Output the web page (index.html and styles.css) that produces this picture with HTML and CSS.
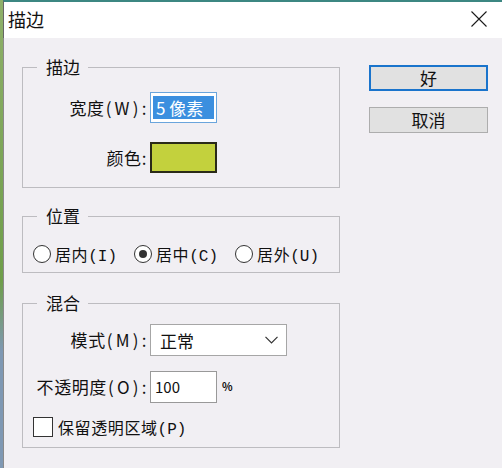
FILE: index.html
```html
<!DOCTYPE html>
<html lang="zh-CN">
<head>
<meta charset="utf-8">
<title>描边</title>
<link rel="stylesheet" href="styles.css">
</head>
<body>
<div class="window">
  <div class="titlebar">
    <span class="title">描边</span>
    <svg class="close" width="16" height="16" viewBox="0 0 16 16"><path d="M0.5 0.5 L15.5 15.5 M15.5 0.5 L0.5 15.5" stroke="#1a1a1a" stroke-width="1.1" fill="none"/></svg>
  </div>
  <div class="body">
    <div class="groups">
      <fieldset class="group g-stroke">
        <legend>描边</legend>
        <div class="form">
          <span class="lbl">宽度<span class="en">(W)</span>:</span>
          <div class="field width-field"><span class="sel">5 像素</span></div>
          <span class="lbl">颜色:</span>
          <div class="swatch"></div>
        </div>
      </fieldset>
      <fieldset class="group g-pos">
        <legend>位置</legend>
        <div class="radios">
          <label class="opt"><input type="radio" name="pos"><span>居内<span class="mono">(I)</span></span></label>
          <label class="opt"><input type="radio" name="pos" checked><span>居中<span class="mono">(C)</span></span></label>
          <label class="opt"><input type="radio" name="pos"><span>居外<span class="mono">(U)</span></span></label>
        </div>
      </fieldset>
      <fieldset class="group g-blend">
        <legend>混合</legend>
        <div class="form blend-form">
          <span class="lbl">模式<span class="en">(M)</span>:</span>
          <div class="select"><span>正常</span>
            <svg width="13" height="8" viewBox="0 0 13 8"><path d="M0.5 0.8 L6.5 6.8 L12.5 0.8" stroke="#333" stroke-width="1.2" fill="none"/></svg>
          </div>
          <span class="lbl">不透明度<span class="en">(O)</span>:</span>
          <div class="opacity-row"><div class="field num-field">100</div><span class="pct">%</span></div>
        </div>
        <label class="check"><input type="checkbox"><span>保留透明区域<span class="mono">(P)</span></span></label>
      </fieldset>
    </div>
    <div class="buttons">
      <button class="btn default">好</button>
      <button class="btn">取消</button>
    </div>
  </div>
</div>
</body>
</html>
```

FILE: styles.css
```css
html, body {
  margin: 0;
  padding: 0;
  height: 100%;
}
body {
  background: #f1eff3;
  font-family: "Noto Sans CJK SC", "Noto Sans", sans-serif;
  color: #111;
  overflow: hidden;
}
.window {
  height: 468px;
  box-sizing: border-box;
  border-left: 3px solid #7ea65a;
  border-image: linear-gradient(to bottom, #8fb06a 0%, #6f9e4a 60%, #7f98b3 75%, #7f98b3 100%) 1;
  border-left-width: 3px;
  border-left-style: solid;
  border-top: none;
  display: flex;
  flex-direction: column;
}
.titlebar {
  height: 38px;
  box-sizing: border-box;
  background: #ffffff;
  border-top: 2px solid #3c8782;
  border-left: 1px solid #666;
  display: flex;
  align-items: center;
  justify-content: space-between;
  padding: 0 15px 0 4px;
}
.title {
  font-size: 18px;
  line-height: 20px;
  margin-top: -2px;
}
.close {
  display: block;
  margin-top: -2px;
}
.body {
  flex: 1;
  display: flex;
  align-items: flex-start;
  padding: 19px 0 0 18px;
  gap: 29px;
  border-left: 1px solid #8a8a8a;
}
.groups {
  display: flex;
  flex-direction: column;
  width: 318px;
}
.group {
  margin: 0;
  border: 1px solid #bdbcc0;
  padding: 0;
  min-width: 0;
}
.group legend {
  font-size: 17px;
  line-height: 20px;
  padding: 0 8px 0 9px;
  margin-left: 14px;
}
.g-stroke { padding: 15px 0 14px 0; }
.g-pos { margin-top: 18px; padding: 18px 0 8px 0; }
.g-blend { margin-top: 20px; padding: 11px 0 10px 0; }

.form {
  display: grid;
  grid-template-columns: 124px auto;
  column-gap: 3px;
  row-gap: 19px;
  align-items: center;
  justify-items: start;
}
.blend-form { row-gap: 15px; }
.lbl {
  justify-self: end;
  font-size: 17px;
  line-height: 20px;
  letter-spacing: 0.6px;
  white-space: nowrap;
}
.lbl .en {
  letter-spacing: 3.2px;
  padding-left: 1px;
}
.field {
  box-sizing: border-box;
  background: #fff;
  border: 1px solid #9a9a9a;
}
.width-field {
  width: 67px;
  height: 31px;
  border-color: #6aa5dc;
  padding: 3px 2px;
  display: flex;
}
.sel {
  background: #3b8fdf;
  color: #fff;
  font-size: 17px;
  line-height: 23px;
  padding: 0 2px 0 3px;
  width: 100%;
  white-space: nowrap;
}
.swatch {
  width: 67px;
  height: 31px;
  box-sizing: border-box;
  background: #c3d13d;
  border: 2px solid #2a2a18;
}
.radios {
  display: flex;
  align-items: center;
  padding-left: 10px;
  gap: 17px;
  height: 20px;
}
.opt, .check {
  display: flex;
  align-items: center;
  gap: 4px;
  font-size: 16px;
  line-height: 20px;
  height: 20px;
  letter-spacing: 0.6px;
  white-space: nowrap;
}
.opt > span, .check > span {
  display: block;
  line-height: 20px;
}
.mono {
  font-family: "Liberation Mono", "DejaVu Sans Mono", monospace;
  letter-spacing: 0;
  line-height: 1;
}
.opt input {
  appearance: none;
  -webkit-appearance: none;
  margin: 0;
  width: 18px;
  height: 18px;
  border: 1.5px solid #333;
  border-radius: 50%;
  background: #fff;
  box-sizing: border-box;
  display: grid;
  place-items: center;
}
.opt input:checked::after {
  content: "";
  width: 8px;
  height: 8px;
  border-radius: 50%;
  background: #333;
}
.select {
  box-sizing: border-box;
  width: 137px;
  height: 32px;
  background: #fff;
  border: 1px solid #a6a6a6;
  display: flex;
  align-items: center;
  justify-content: space-between;
  padding: 0 8px 0 9px;
  font-size: 17px;
}
.select svg { display: block; }
.opacity-row {
  display: flex;
  align-items: center;
  gap: 5px;
}
.num-field {
  width: 67px;
  height: 32px;
  font-size: 15px;
  line-height: 30px;
  padding-left: 4px;
  border-color: #999;
}
.pct {
  font-size: 11px;
  font-weight: bold;
  margin-top: -3px;
}
.check {
  margin: 14px 0 0 10px;
  gap: 5px;
}
.check input {
  appearance: none;
  -webkit-appearance: none;
  margin: 0;
  width: 20px;
  height: 20px;
  box-sizing: border-box;
  border: 1.5px solid #333;
  background: #fff;
}
.buttons {
  margin-top: 8px;
  display: flex;
  flex-direction: column;
  gap: 16px;
}
.btn {
  width: 119px;
  height: 26px;
  box-sizing: border-box;
  background: #e1e1e1;
  border: 1px solid #adadad;
  font-family: "Noto Sans CJK SC", sans-serif;
  font-size: 17px;
  line-height: 20px;
  color: #111;
  padding: 0;
}
.btn.default {
  border: 2px solid #1a74cc;
}
```
